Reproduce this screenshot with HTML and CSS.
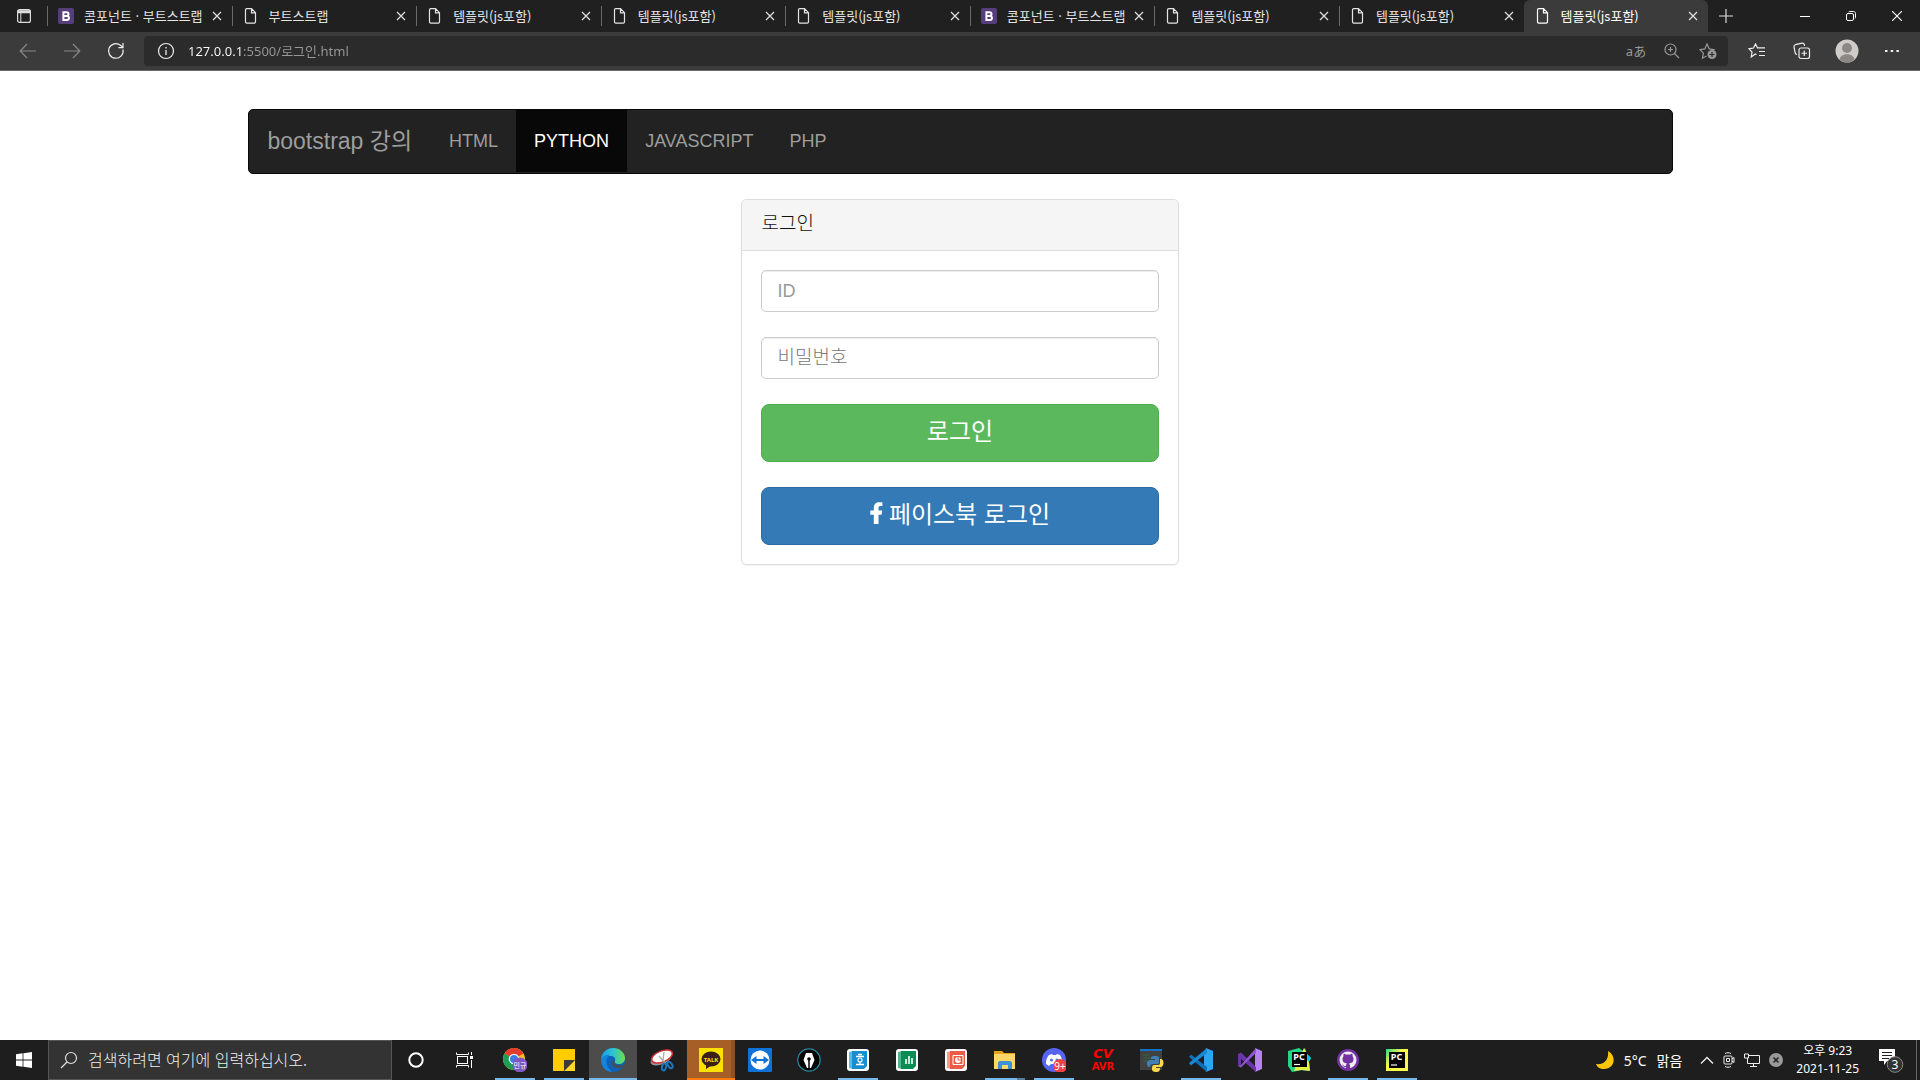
FILE: index.html
```
<!DOCTYPE html>
<html lang="ko">
  <head>
    <meta charset="UTF-8" />
    <meta name="viewport" content="width=device-width, initial-scale=1.0" />
    <title>템플릿(js포함)</title>
    <link rel="stylesheet" href="styles.css">
  </head>
  <body>
    <!-- shared icons -->
    <svg class="defs" aria-hidden="true">
      <symbol id="doc" viewBox="0 0 16 16">
        <path d="M4.5.7h4l4 4v9.1c0 .8-.5 1.4-1.3 1.4H3.8c-.8 0-1.3-.6-1.3-1.4V2c0-.8.5-1.3 1.3-1.3zM8.5.9v4h4" fill="none" stroke="currentColor" stroke-width="1.2"/>
      </symbol>
      <symbol id="boot" viewBox="0 0 16 16">
        <rect width="16" height="16" rx="2" fill="#563d7c"/>
        <path d="M5.4 4.2h3.2a1.9 1.9 0 0 1 0 3.8H5.4zM5.4 8h3.5a2 2 0 0 1 0 4H5.4z" fill="none" stroke="#fff" stroke-width="2"/>
      </symbol>
      <symbol id="close" viewBox="0 0 10 10">
        <path d="M1 1l8 8M9 1L1 9" fill="none" stroke="currentColor" stroke-width="1.3"/>
      </symbol>
    </svg>

    <header class="browser">
      <div class="tabbar">
        <button class="tab-action" aria-label="탭 작업">
          <svg width="16" height="16" viewBox="0 0 16 16"><rect x="1.6" y="1.6" width="12.8" height="12.8" rx="2" fill="none" stroke="#ddd" stroke-width="1.2"/><path d="M1.6 3.2h12.8M1.6 4.2h12.8" stroke="#ddd" stroke-width="2"/><path d="M4.8 4v10" stroke="#ddd"/></svg>
        </button>
        <div class="tabs">
          <div class="tab"><svg class="fav"><use href="#boot"/></svg><span>콤포넌트 · 부트스트랩</span><button aria-label="닫기"><svg><use href="#close"/></svg></button></div>
          <div class="tab"><svg class="fav"><use href="#doc"/></svg><span>부트스트랩</span><button aria-label="닫기"><svg><use href="#close"/></svg></button></div>
          <div class="tab"><svg class="fav"><use href="#doc"/></svg><span>템플릿(js포함)</span><button aria-label="닫기"><svg><use href="#close"/></svg></button></div>
          <div class="tab"><svg class="fav"><use href="#doc"/></svg><span>템플릿(js포함)</span><button aria-label="닫기"><svg><use href="#close"/></svg></button></div>
          <div class="tab"><svg class="fav"><use href="#doc"/></svg><span>템플릿(js포함)</span><button aria-label="닫기"><svg><use href="#close"/></svg></button></div>
          <div class="tab"><svg class="fav"><use href="#boot"/></svg><span>콤포넌트 · 부트스트랩</span><button aria-label="닫기"><svg><use href="#close"/></svg></button></div>
          <div class="tab"><svg class="fav"><use href="#doc"/></svg><span>템플릿(js포함)</span><button aria-label="닫기"><svg><use href="#close"/></svg></button></div>
          <div class="tab"><svg class="fav"><use href="#doc"/></svg><span>템플릿(js포함)</span><button aria-label="닫기"><svg><use href="#close"/></svg></button></div>
          <div class="tab current"><svg class="fav"><use href="#doc"/></svg><span>템플릿(js포함)</span><button aria-label="닫기"><svg><use href="#close"/></svg></button></div>
        </div>
        <button class="new-tab" aria-label="새 탭"><svg width="14" height="14" viewBox="0 0 14 14"><path d="M7 0v14M0 7h14" stroke="#ddd" stroke-width="1.2"/></svg></button>
        <div class="window-buttons">
          <button aria-label="최소화"><svg width="10" height="10" viewBox="0 0 10 10"><path d="M0 5.5h10" stroke="#fff"/></svg></button>
          <button aria-label="이전 크기로"><svg width="10" height="10" viewBox="0 0 10 10" fill="none" stroke="#fff"><rect x=".5" y="2.5" width="7" height="7" rx="1.5"/><path d="M2.5 1.2c.2-.5.6-.7 1-.7h4c1.200 0 2 .8 2 2v4c0 .5-.2.800-.7 1"/></svg></button>
          <button aria-label="닫기"><svg width="10" height="10" viewBox="0 0 10 10"><path d="M0 0l10 10M10 0L0 10" stroke="#fff" stroke-width="1.1"/></svg></button>
        </div>
      </div>

      <div class="toolbar">
        <button class="dim" aria-label="뒤로"><svg width="18" height="16" viewBox="0 0 18 16"><path d="M17 8H1.500M8 1L1.200 8 8 15"/></svg></button>
        <button class="dim" aria-label="앞으로"><svg width="18" height="16" viewBox="0 0 18 16"><path d="M1 8h15.500M10 1l6.800 7L10 15"/></svg></button>
        <button aria-label="새로 고침"><svg width="18" height="18" viewBox="0 0 18 18"><path d="M16 7.500A7.300 7.300 0 1 1 13.500 3.300L16 5.500M16 1v4.600h-4.600"/></svg></button>
        <div class="address">
          <svg width="18" height="18" viewBox="0 0 18 18" fill="none" stroke="#ddd"><circle cx="9" cy="9" r="7.500"/><path d="M9 8v5M9 5v1.500" stroke-width="1.300"/></svg>
          <input class="url" type="text" aria-label="주소" value="127.0.0.1:5500/로그인.html" />
          <button class="translate" aria-label="번역">aあ</button>
          <button aria-label="확대"><svg width="16" height="16" viewBox="0 0 16 16"><circle cx="6.500" cy="6.500" r="5.500"/><path d="M10.500 10.500L15 15M6.500 4v5M4 6.500h5"/></svg></button>
          <button aria-label="즐겨찾기에 추가"><svg width="18" height="18" viewBox="0 0 18 18"><path d="M7.500 14l-4 2.200.9-5L1 7.600l4.800-.7L8 2l2.300 4.900 4.700.7-1.500 1.400"/><circle cx="13" cy="12.500" r="4.500" fill="#999" stroke="none"/><path d="M13 10v5M10.500 12.500h5" stroke="#2b2b2b"/></svg></button>
        </div>
        <button class="side" aria-label="즐겨찾기"><svg width="18" height="16" viewBox="0 0 18 16"><path d="M8.500 11.500L7.300 11l-4 3 .7-5L1 5.800l4.500-.8L7.500 1l2 3.800h7.500M11 8.500h6M11 12.500h6"/></svg></button>
        <button class="side" aria-label="컬렉션"><svg width="18" height="18" viewBox="0 0 18 18"><rect x="6" y="6" width="10.500" height="10.500" rx="2"/><path d="M11.250 8.500v5.500M8.500 11.250H14M4 12.500C3 12.300 2.500 12 2.200 11L1 4.800C.8 3.500 1.500 3 2.400 2.700L9 1.200c1.300-.2 2 .3 2.300 1.300l.3 1.300"/></svg></button>
        <button class="side" aria-label="프로필"><svg class="avatar" width="24" height="24" viewBox="0 0 24 24"><circle cx="12" cy="12" r="11.500" fill="#cfcdca"/><circle cx="12" cy="9" r="5" fill="#8b8885"/><path d="M4.500 20.500c1-7 14-7 15 0a11.500 11.500 0 0 1-15 0z" fill="#8b8885"/></svg></button>
        <button class="side" aria-label="설정 및 기타"><svg width="14" height="4" viewBox="0 0 14 4"><path d="M0 2h2.500M5.700 2h2.500M11.400 2h2.500" stroke-width="2"/></svg></button>
      </div>
    </header>

    <main class="page">
      <div class="container">
        <nav class="navbar">
          <a class="navbar-brand" href="#">bootstrap 강의</a>
          <ul class="nav">
            <li><a href="#">HTML</a></li>
            <li class="active"><a href="#">PYTHON</a></li>
            <li><a href="#">JAVASCRIPT</a></li>
            <li><a href="#">PHP</a></li>
          </ul>
        </nav>

        <div class="login-col">
          <div class="panel">
            <div class="panel-heading"><h3>로그인</h3></div>
            <form class="panel-body">
              <input class="form-control" type="text" placeholder="ID" aria-label="ID" />
              <input class="form-control" type="password" placeholder="비밀번호" aria-label="비밀번호" />
              <button type="button" class="btn btn-success">로그인</button>
              <button type="button" class="btn btn-primary">
                <svg width="13" height="22" viewBox="0 0 13 22"><path d="M3.800 22V12.800H.3V8.600h3.500V6C3.800 2.200 6 .2 9.200.2c1.600 0 3.200.2 3.200.2v3.700h-1.900c-1.600 0-2 .9-2 1.800v2.700h3.700l-.6 4.200H8.500V22z" fill="#fff"/></svg>
                페이스북 로그인
              </button>
            </form>
          </div>
        </div>
      </div>
    </main>

    <footer class="taskbar">
      <button class="start" aria-label="시작"><svg width="16" height="16" viewBox="0 0 16 16" fill="#fff"><path d="M0 2.200L6.600 1.300v6.300H0zM7.400 1.200L16 0v7.600H7.400zM0 8.400h6.600v6.300L0 13.800zM7.400 8.400H16V16l-8.600-1.200z"/></svg></button>
      <label class="search">
        <svg width="18" height="18" viewBox="0 0 18 18" fill="none" stroke="#ddd" stroke-width="1.200"><circle cx="11" cy="7" r="5.500"/><path d="M7 11l-6 6"/></svg>
        <input type="text" placeholder="검색하려면 여기에 입력하십시오." aria-label="검색" />
      </label>
      <button class="start" aria-label="Cortana"><svg width="16" height="16" viewBox="0 0 16 16"><circle cx="8" cy="8" r="6.700" fill="none" stroke="#fff" stroke-width="2"/></svg></button>
      <button class="start" aria-label="작업 보기"><svg width="17" height="16" viewBox="0 0 17 16" fill="none" stroke="#fff"><rect x="1.500" y="4.500" width="10" height="7"/><path d="M.5 .5v2h12v-2M.5 15.500v-2h12v2M15.500 0v3M15.500 8v8"/><path d="M14 5.500h3" stroke-width="3"/></svg></button>

      <div class="apps">
        <button class="app open" aria-label="Chrome"><svg viewBox="0 0 24 24"><circle cx="11" cy="11" r="11" fill="#fbc116"/><path d="M11 11L1.500 5.500a11 11 0 0 1 19 0z" fill="#e33b2e"/><path d="M1.500 5.500A11 11 0 0 0 11 22l4-8-4-3z" fill="#1f9d55"/><circle cx="11" cy="11" r="5.300" fill="#fff"/><circle cx="11" cy="11" r="4" fill="#3b7de0"/><circle cx="17" cy="17" r="7.500" fill="#7e57c2"/><text x="17" y="20" class="tiny">민규</text></svg></button>
        <button class="app open" aria-label="스티커 메모"><svg viewBox="0 0 24 24"><path d="M1 1h22v11L12 23H1z" fill="#fc0"/><path d="M23 12v11H12z" fill="#ffd52e"/><path d="M12 12h11L12 23z" fill="#3b3a39"/></svg></button>
        <button class="app open focus" aria-label="Edge"><svg viewBox="0 0 24 24"><defs><linearGradient id="eg"><stop offset="0" stop-color="#1a9de5"/><stop offset=".5" stop-color="#2cc3d2"/><stop offset="1" stop-color="#6fe04c"/></linearGradient></defs><circle cx="12" cy="12" r="12" fill="#0f62b5"/><path d="M0 11C1 4 6 0 12 0c7 0 12 5 12 10 0 4-3 6-6 6-3 0-5-1-4-3 1-3-1-5-5-5-4 0-7 2-9 3z" fill="url(#eg)"/><path d="M0 11c2-3 5-4.500 9-4.500-5 3-5 12 2 17.500C5 24 0 19 0 11z" fill="#1784d8"/><path d="M14 12c-2 3 0 7 9 5-1 2-3 3-6 3-6 0-9-6-3-8z" fill="#4c4c4c"/></svg></button>
        <button class="app" aria-label="캡처 도구"><svg viewBox="0 0 24 24"><ellipse cx="11" cy="11" rx="11" ry="5.500" transform="rotate(-22 11 11)" fill="#999"/><ellipse cx="12" cy="8.500" rx="11" ry="5.500" transform="rotate(-22 12 8.500)" fill="#fff" stroke="#d12f35" stroke-width="1.500"/><path d="M9 8l7 8M14 4l-1 9" stroke="#aaa" stroke-width="1.300"/><g fill="none" stroke="#1b76bd" stroke-width="2"><ellipse cx="14" cy="19" rx="2" ry="3.500" transform="rotate(15 14 19)"/><ellipse cx="20" cy="17" rx="2" ry="3.500" transform="rotate(-35 20 17)"/></g></svg></button>
        <button class="app open alert" aria-label="카카오톡"><svg viewBox="0 0 24 24"><path d="M0 0h24v24H0z" fill="#fae100"/><ellipse cx="12" cy="11" rx="9.500" ry="7.500" fill="#3a2118"/><path d="M7 15l0 6 6-4z" fill="#3a2118"/><text x="12" y="13.500" class="talk">TALK</text></svg></button>
        <button class="app" aria-label="TeamViewer"><svg viewBox="0 0 24 24"><rect width="24" height="24" rx="1" fill="#0e72d9"/><circle cx="12" cy="12" r="9.500" fill="#fff"/><path d="M3 12l5.500-4v3h7V8l5.500 4-5.500 4v-3h-7v3z" fill="#0e72d9"/></svg></button>
        <button class="app" aria-label="펜"><svg viewBox="0 0 24 24"><circle cx="12" cy="12" r="11.200" fill="#050505" stroke="#29899f" stroke-width="1.200"/><path d="M9 5h6l2.500 7L14 20h-4l-3.500-8z" fill="#fff"/><path d="M12 11v9" stroke="#000" stroke-width="1.500"/><circle cx="12" cy="11" r="1.800"/></svg></button>
        <button class="app open" aria-label="한글"><svg viewBox="0 0 24 24"><rect x="1" y="1" width="22" height="22" rx="3" fill="#fff"/><path d="M3 4l4-1v18l-4-1z" fill="#5db9e6"/><path d="M6 3h15v15l-3 3H6z" fill="#158fd0"/><path d="M10 8.500h8M12 6.500h4M14 14v2.500M10 16.500h8" stroke="#fff" stroke-width="1.300"/><circle cx="14" cy="12" r="2" fill="none" stroke="#fff" stroke-width="1.200"/></svg></button>
        <button class="app" aria-label="한셀"><svg viewBox="0 0 24 24"><rect x="1" y="1" width="22" height="22" rx="3" fill="#fff"/><path d="M3 4l4-1v18l-4-1z" fill="#4fb58a"/><path d="M6 3h15v15l-3 3H6z" fill="#0c8c55"/><path d="M11 11v5M14 8v8M17 10v6" stroke="#fff" stroke-width="1.600"/></svg></button>
        <button class="app" aria-label="한쇼"><svg viewBox="0 0 24 24"><rect x="1" y="1" width="22" height="22" rx="3" fill="#fff"/><path d="M3 4l4-1v18l-4-1z" fill="#f39a88"/><path d="M6 3h15v15l-3 3H6z" fill="#ea5c47"/><path d="M9 7.500h10v9H9z" fill="none" stroke="#fff"/><circle cx="14" cy="12" r="3" fill="#fff"/><path d="M14 12V9M14 12h3" stroke="#ea5c47"/></svg></button>
        <button class="app open group" aria-label="파일 탐색기"><svg viewBox="0 0 24 24"><path d="M1 3h8l2 2h11v6H1z" fill="#e6a219"/><path d="M1 6h21v15H1z" fill="#ffd768"/><path d="M5 21v-6c0-1 1-2 2-2h10c1 0 2 1 2 2v6h-4v-4H9v4z" fill="#3b93d6"/></svg></button>
        <button class="app open" aria-label="Discord"><svg viewBox="0 0 24 24"><circle cx="12" cy="12" r="12" fill="#5865f2"/><path d="M7 7l3-1 1 1h3l1-1 3 1c2 3 2.500 6 2 9l-3 2-2-2H9l-2 2-3-2c-.5-3 1-7 3-9z" fill="#fff"/><circle cx="9.500" cy="12" r="1.500" fill="#5865f2"/><circle cx="15" cy="12" r="1.500" fill="#5865f2"/><circle cx="18" cy="18" r="7" fill="#ed4245"/><text x="18" y="21.500" class="badge">9+</text></svg></button>
        <button class="app" aria-label="CodeVisionAVR"><span class="avr"><i>CV</i><b>AVR</b></span></button>
        <button class="app" aria-label="Python"><svg viewBox="0 0 24 24"><path d="M0 1h22v21H0z" fill="#414141"/><path d="M0 1h22v2H0z" fill="#1173c7"/><path d="M3 7h6M3 10h8M3 13h4" stroke="#2e6b35"/><path d="M15 8c4 0 4 1 4 3v3c0 2-1 2-3 2h-3c-2 0-3 1-3 3-3 0-3-2-3-4s1-3 3-3h5v-1h-4c0-2 0-3 4-3z" fill="#3f7fb5"/><path d="M20 11c3 0 3.500 2 3.500 4s-1 4-3 4H16v1h4c0 3-1 4-4 4s-4-1-4-3 0-4 3-4h3c2 0 2-1 2-3z" fill="#ffd94a"/></svg></button>
        <button class="app open" aria-label="Visual Studio Code"><svg viewBox="0 0 24 24"><path d="M17 0l7 3v18l-7 3-2-6V6z" fill="#2aa7f0"/><path d="M2 6.500L18 19v5L0 9z" fill="#0f70b7"/><path d="M2 17.500L18 5V0L0 15z" fill="#1788d1"/></svg></button>
        <button class="app" aria-label="Visual Studio"><svg viewBox="0 0 24 24"><path d="M17 0l7 3v18l-7 3z" fill="#b783f0"/><path d="M0 6l3-1.500L18 19v5L3 11v6l-3 1z" fill="#6a35a8"/><path d="M3 19.500L0 18l3-1L18 0v5z" fill="#9155d0"/></svg></button>
        <button class="app" aria-label="PyCharm"><svg viewBox="0 0 24 24"><path d="M1 3l11-3 4 3 2-3 2 6 4 4-2 4 1 9-8-1-10 2-4-6z" fill="#21d789"/><path d="M17 0l3 6-1 5 3 3 1 9-9-1-7 1 3-8z" fill="#e5f04b"/><path d="M20 6l4 4-3 3z" fill="#07c3f2"/><path d="M5 4h15v15H5z"/><text x="12" y="12" class="pc">PC</text><path d="M7 16.500h6" stroke="#fff" stroke-width="1.200"/></svg></button>
        <button class="app open" aria-label="GitHub"><svg viewBox="0 0 24 24"><circle cx="12" cy="12" r="11" fill="#7232a2"/><circle cx="12" cy="12" r="8.500" fill="#eee"/><path d="M10 21v-3.500c.1-1 .5-1.500 1-2-3-.3-4.500-1.500-4.500-4.500 0-1.200.4-2 1-2.700-.2-.7-.2-1.700.2-2.500 1 0 1.900.6 2.500 1 1.200-.3 2.400-.3 3.600 0 .7-.4 1.500-1 2.500-1 .4.800.4 1.800.2 2.500.6.700 1 1.500 1 2.700 0 3-1.500 4.200-4.500 4.500.6.500 1 1.200 1 2.500V21z" fill="#7232a2"/><path d="M10 18.500c-2 .5-2.500-1-3.500-1.500" fill="none" stroke="#7232a2"/></svg></button>
        <button class="app open" aria-label="PyCharm CE"><svg viewBox="0 0 24 24"><defs><linearGradient id="pg" x2="1" y2="1"><stop offset="0" stop-color="#21d789"/><stop offset=".4" stop-color="#fcf84a"/></linearGradient></defs><path d="M1 1h22v22H1z" fill="url(#pg)"/><path d="M4 4h16v16H4z"/><text x="11.500" y="12" class="pc">PC</text><path d="M6 17h6" stroke="#fff" stroke-width="1.200"/></svg></button>
      </div>

      <div class="tray">
        <button class="weather"><svg width="18" height="18" viewBox="0 0 18 18"><path d="M12 0c9 5 7 18-4 18-4 0-7-2-8-5 8 1 13-4 12-13z" fill="#fdc50b"/></svg><span>5°C</span><span>맑음</span></button>
        <div class="tray-icons">
          <svg width="14" height="8" viewBox="0 0 14 8"><path d="M1 7.500L7 1.500l6 6" stroke-width="1.300"/></svg>
          <svg width="12" height="16" viewBox="0 0 12 16"><rect x="1" y="4" width="8" height="8" rx="1"/><path d="M9 7l2-1.500v5L9 9M3.500 6.500h3v3h-3zM2 1.500c2-1 4-1 6 0M2 14.500c2 1 4 1 6 0"/></svg>
          <svg width="16" height="15" viewBox="0 0 16 15"><path d="M5 2.500h10.500v8H3.500V5M6 13.500h7M9.500 11v2M.5 1h4v4h-4z"/></svg>
          <svg width="14" height="14" viewBox="0 0 14 14"><circle cx="7" cy="7" r="7" fill="#999" stroke="none"/><path d="M4.500 4.500l5 5M9.500 4.500l-5 5" stroke="#222" stroke-width="1.500"/></svg>
        </div>
        <div class="clock">오후 9:23<br>2021-11-25</div>
        <button class="notice" aria-label="알림 3개"><svg width="25" height="25" viewBox="0 0 25 25"><path d="M0 1h16v12H8l-3 4v-4H0z" fill="#fff"/><path d="M3 4.500h10M3 7.500h10M3 10.500h7" stroke="#222"/><circle cx="16" cy="16.500" r="7.800" fill="#333" stroke="#888"/><text x="16" y="21" class="count">3</text></svg></button>
        <span class="peek"></span>
      </div>
    </footer>
  </body>
</html>
```
FILE: styles.css
```
* {
  box-sizing: border-box;
}

body {
  margin: 0;
  min-height: 100vh;
  display: flex;
  flex-direction: column;
  background-color: #fff;
  font-family: "Liberation Sans", "Noto Sans CJK KR", sans-serif;
  font-size: 18px;
  color: #333;
}

button {
  border: none;
  padding: 0;
  background: none;
  font-family: inherit;
  cursor: pointer;
  display: flex;
  align-items: center;
  justify-content: center;
}

svg {
  flex-shrink: 0;
}

.defs {
  display: none;
}

/* browser */
.browser {
  background-color: #3b3b3b;
  border-bottom: 1px solid #6b6767;
  font-family: "Noto Sans", "Noto Sans CJK KR", sans-serif;
}

.tabbar {
  display: flex;
  height: 32px;
  background-color: #202020;
}

.tab-action {
  width: 47px;
}

.tabs {
  display: flex;
  flex: 0 1 1661px;
  min-width: 0;
}

.tab {
  flex: 1;
  min-width: 0;
  display: flex;
  align-items: center;
  padding: 0 9px 0 11px;
  color: #e4e4e4;
  font-family: "Noto Sans CJK KR", sans-serif;
  font-size: 13px;
  position: relative;
}

.tab::before {
  content: "";
  position: absolute;
  left: 0;
  top: 6px;
  width: 1px;
  height: 20px;
  background-color: #6a6a6a;
}

.tab span {
  flex: 1;
  margin: 0 2px 0 10px;
  padding-bottom: 2px;
  overflow: hidden;
  white-space: nowrap;
}

.fav {
  width: 16px;
  height: 16px;
}

.tab button {
  width: 12px;
  height: 16px;
  color: #ddd;
}

.tab button svg {
  width: 10px;
  height: 10px;
}

.tab.current {
  background-color: #3b3b3b;
  color: #fff;
  border-radius: 6px 6px 0 0;
}

.tab.current::before {
  display: none;
}

.new-tab {
  width: 36px;
}

.window-buttons {
  display: flex;
  margin-left: auto;
}

.window-buttons button {
  width: 46px;
}

.toolbar {
  display: flex;
  align-items: center;
  height: 38px;
  padding: 0 6px;
}

.toolbar button {
  width: 44px;
  height: 30px;
}

.toolbar .side {
  width: 45px;
}

.toolbar svg {
  fill: none;
  stroke: #eee;
  stroke-width: 1.2;
}

.toolbar .dim svg {
  stroke: #888;
}

.toolbar .avatar {
  stroke: none;
}

.address {
  flex: 1;
  display: flex;
  align-items: center;
  height: 30px;
  margin: 0 6px;
  padding: 0 2px 0 13px;
  background-color: #2b2b2b;
  border-radius: 4px;
}

.address button {
  width: 36px;
}

.address button svg {
  stroke: #999;
}

.url {
  flex: 1;
  height: 30px;
  margin-left: 13px;
  padding: 0 0 2px;
  border: none;
  outline: none;
  font-family: "Noto Sans", "Noto Sans CJK KR", sans-serif;
  font-size: 13px;
  /* host is white, the rest of the address is grey */
  color: transparent;
  background: linear-gradient(to right, #fff 55px, #999 55px);
  -webkit-background-clip: text;
  background-clip: text;
}

.toolbar .translate {
  padding-bottom: 2px;
  color: #999;
  font-size: 13px;
}

/* page */
.page {
  flex: 1;
  padding: 38px 20px;
}

.container {
  max-width: 1425px;
  margin: 0 auto;
}

.navbar {
  display: flex;
  min-height: 65px;
  margin-bottom: 25px;
  background-color: #222;
  border: 1px solid #080808;
  border-radius: 5px;
}

.navbar a {
  display: flex;
  align-items: center;
  height: 62px;
  padding: 0 18px;
  color: #9d9d9d;
  text-decoration: none;
}

.navbar .navbar-brand {
  padding: 0 19px 4px;
  font-size: 23px;
}

.navbar a:hover {
  color: #fff;
}

.nav {
  display: flex;
  margin: 0;
  padding: 0;
  list-style: none;
}

.nav .active a {
  color: #fff;
  background-color: #080808;
}

.login-col {
  width: 33.3333%;
  margin: 0 auto;
  padding: 0 18px;
}

.panel {
  border: 1px solid #ddd;
  border-radius: 5px;
  box-shadow: 0 1px 1px rgba(0, 0, 0, 0.05);
}

.panel-heading {
  padding: 11px 20px 14px;
  background-color: #f5f5f5;
  border-bottom: 1px solid #ddd;
  border-radius: 4px 4px 0 0;
}

.panel-heading h3 {
  margin: 0;
  color: #111;
  font-size: 19px;
  font-weight: 300;
  line-height: 25px;
}

.panel-body {
  display: flex;
  flex-direction: column;
  gap: 25px;
  padding: 19px;
}

.form-control {
  width: 100%;
  height: 42px;
  padding: 6px 16px;
  font-family: inherit;
  font-size: 18px;
  color: #555;
  border: 1px solid #ccc;
  border-radius: 5px;
  box-shadow: inset 0 1px 1px rgba(0, 0, 0, 0.075);
}

.form-control[type="password"] {
  font-size: 19px;
}

.form-control::placeholder {
  color: #999;
}

.form-control[type="password"]::placeholder {
  color: #777;
  font-weight: 300;
}

.btn {
  gap: 6px;
  height: 58px;
  padding-bottom: 7px;
  color: #fff;
  font-size: 24px;
  border-radius: 8px;
}

.btn-success {
  background-color: #5cb85c;
  border: 1px solid #4cae4c;
}

.btn-primary {
  background-color: #337ab7;
  border: 1px solid #2e6da4;
}

/* taskbar */
.taskbar {
  display: flex;
  height: 40px;
  background-color: #1e1e1e;
  color: #fff;
  font-family: "Noto Sans", "Noto Sans CJK KR", sans-serif;
}

.start {
  width: 48px;
}

.search {
  display: flex;
  align-items: center;
  gap: 10px;
  width: 344px;
  padding: 0 11px;
  background-color: #333;
  border: 1px solid #555;
}

.search input {
  flex: 1;
  min-width: 0;
  padding: 0 0 2px;
  border: none;
  outline: none;
  background: none;
  color: #fff;
  font-family: "Noto Sans CJK KR", sans-serif;
  font-size: 16px;
}

.search input::placeholder {
  color: #eee;
  font-weight: 300;
}

.apps {
  display: flex;
  gap: 1px;
  margin-left: 3px;
}

.app {
  width: 48px;
  position: relative;
}

.app svg {
  width: 24px;
  height: 24px;
}

.app.open::after {
  content: "";
  position: absolute;
  left: 4px;
  right: 4px;
  bottom: 0;
  height: 2px;
  background-color: #76b9ed;
}

.app.focus {
  background-color: #4c4c4c;
}

.app.focus::after,
.app.alert::after {
  left: 0;
  right: 0;
}

.app.group::after {
  border-right: 8px solid #557f9f;
}

.app.alert {
  background-color: #a65f26;
  box-shadow: inset -4px 0 #8f5120;
}

.app.alert::after {
  background-color: #ff7a0f;
}

.tiny,
.talk,
.badge,
.pc,
.count {
  fill: #fff;
  font-size: 7px;
  text-anchor: middle;
}

.talk {
  fill: #fae100;
  font-size: 6px;
  font-weight: 700;
}

.badge {
  font-size: 10px;
}

.pc {
  font-size: 9px;
  font-weight: 700;
}

.count {
  font-size: 12px;
}

.avr {
  display: flex;
  flex-direction: column;
  color: #f00;
  font-family: "DejaVu Sans", sans-serif;
  font-size: 10px;
  font-weight: 700;
  line-height: 12px;
}

.avr i {
  font-size: 13px;
  line-height: 14px;
}

.tray {
  display: flex;
  align-items: center;
  margin-left: auto;
}

.weather {
  gap: 10px;
  color: #fff;
  font-size: 14px;
}

.tray-icons {
  display: flex;
  align-items: center;
  gap: 9px;
  margin: 0 13px 0 18px;
}

.tray-icons svg {
  fill: none;
  stroke: #eee;
}

.clock {
  font-size: 12px;
  line-height: 18px;
  text-align: center;
}

.notice {
  margin: 0 12px 0 20px;
}

.peek {
  width: 4px;
  height: 40px;
  border-left: 1px solid #666;
}
```
